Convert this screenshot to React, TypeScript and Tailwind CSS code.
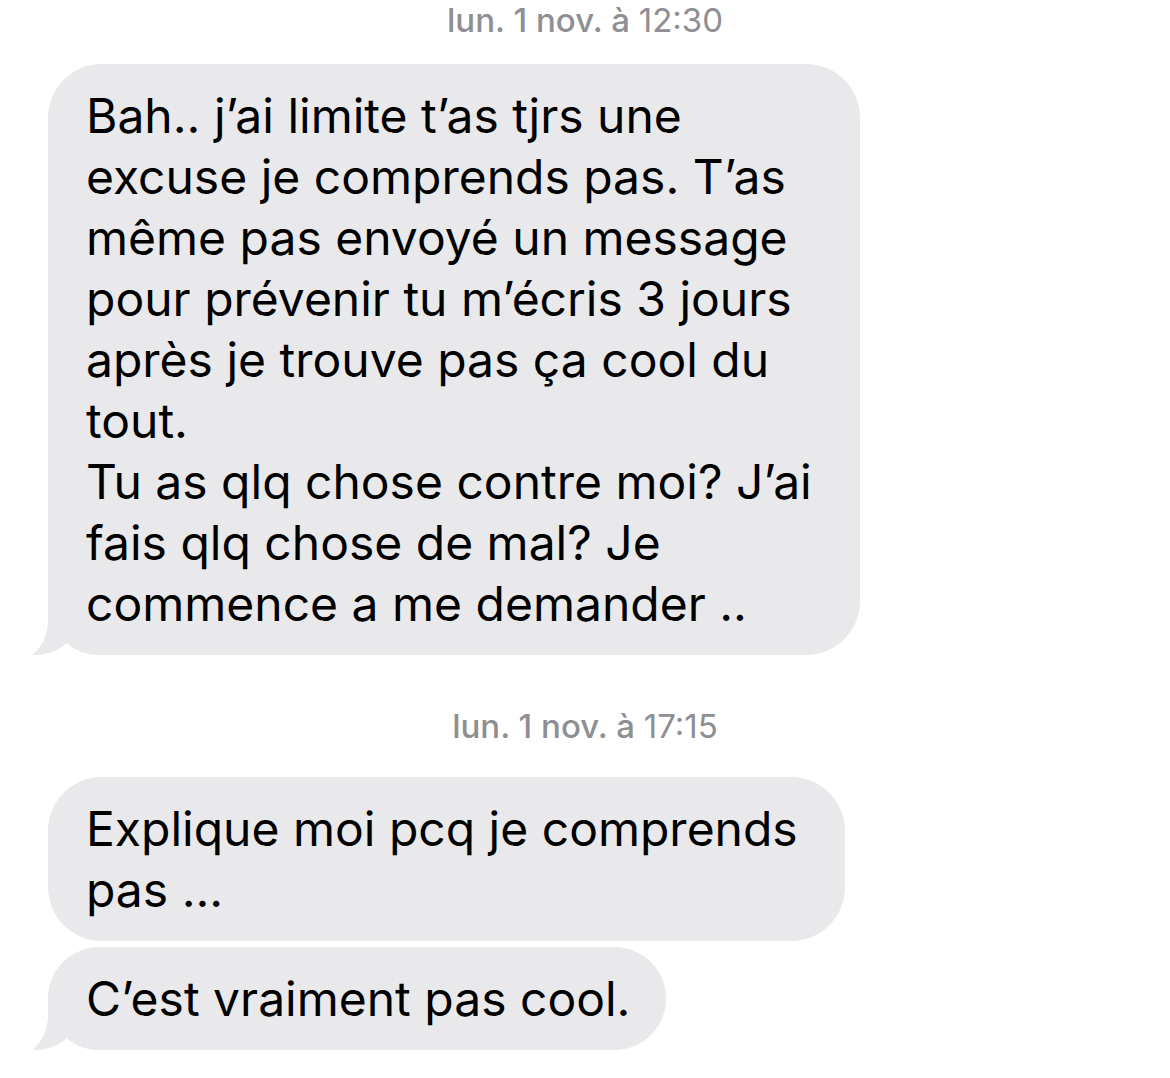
import React from "react";

const Tail = () => (
  <svg
    className="absolute left-[-16px] bottom-0"
    width="70"
    height="50"
    viewBox="0 0 70 50"
  >
    <path
      d="M16 0 L16 14 C16 32 9 43 0 50 C13 50 25 47 35 38 C45 47 56 50 70 50 L70 0 Z"
      fill="#e9e9eb"
    />
  </svg>
);

const Bubble = ({
  lines,
  width,
  tail,
  className = "",
}: {
  lines: string[];
  width: string;
  tail?: boolean;
  className?: string;
}) => (
  <div className={`relative ml-[48px] ${width} ${className}`}>
    {tail && <Tail />}
    <div className="relative rounded-[54px] bg-[#e9e9eb] pl-[38px] pr-[30px] py-[21px]">
      {lines.map((l, i) => (
        <div
          key={i}
          className="whitespace-nowrap text-[48px] leading-[61px] tracking-[0px] text-black"
        >
          {l}
        </div>
      ))}
    </div>
  </div>
);

const Stamp = ({ children, className = "" }: { children: React.ReactNode; className?: string }) => (
  <div
    className={`text-center text-[33px] leading-[40px] font-medium text-[#8e8e93] ${className}`}
  >
    {children}
  </div>
);

export default function App() {
  return (
    <div
      className="w-[1170px] h-[1078px] bg-white overflow-hidden"
      style={{ fontFamily: "Inter, 'Liberation Sans', sans-serif" }}
    >
      <Stamp>
        lun. 1 nov. à <span className="font-normal">12:30</span>
      </Stamp>
      <Bubble
        className="mt-[24px]"
        width="w-[812px]"
        tail
        lines={[
          "Bah.. j’ai limite t’as tjrs une",
          "excuse je comprends pas. T’as",
          "même pas envoyé un message",
          "pour prévenir tu m’écris 3 jours",
          "après je trouve pas ça cool du",
          "tout.",
          "Tu as qlq chose contre moi? J’ai",
          "fais qlq chose de mal? Je",
          "commence a me demander ..",
        ]}
      />
      <Stamp className="mt-[51px]">
        lun. 1 nov. à <span className="font-normal">17:15</span>
      </Stamp>
      <Bubble
        className="mt-[31px]"
        width="w-[797px]"
        lines={["Explique moi pcq je comprends", "pas ..."]}
      />
      <Bubble
        className="mt-[6px]"
        width="w-[618px]"
        tail
        lines={["C’est vraiment pas cool."]}
      />
    </div>
  );
}
